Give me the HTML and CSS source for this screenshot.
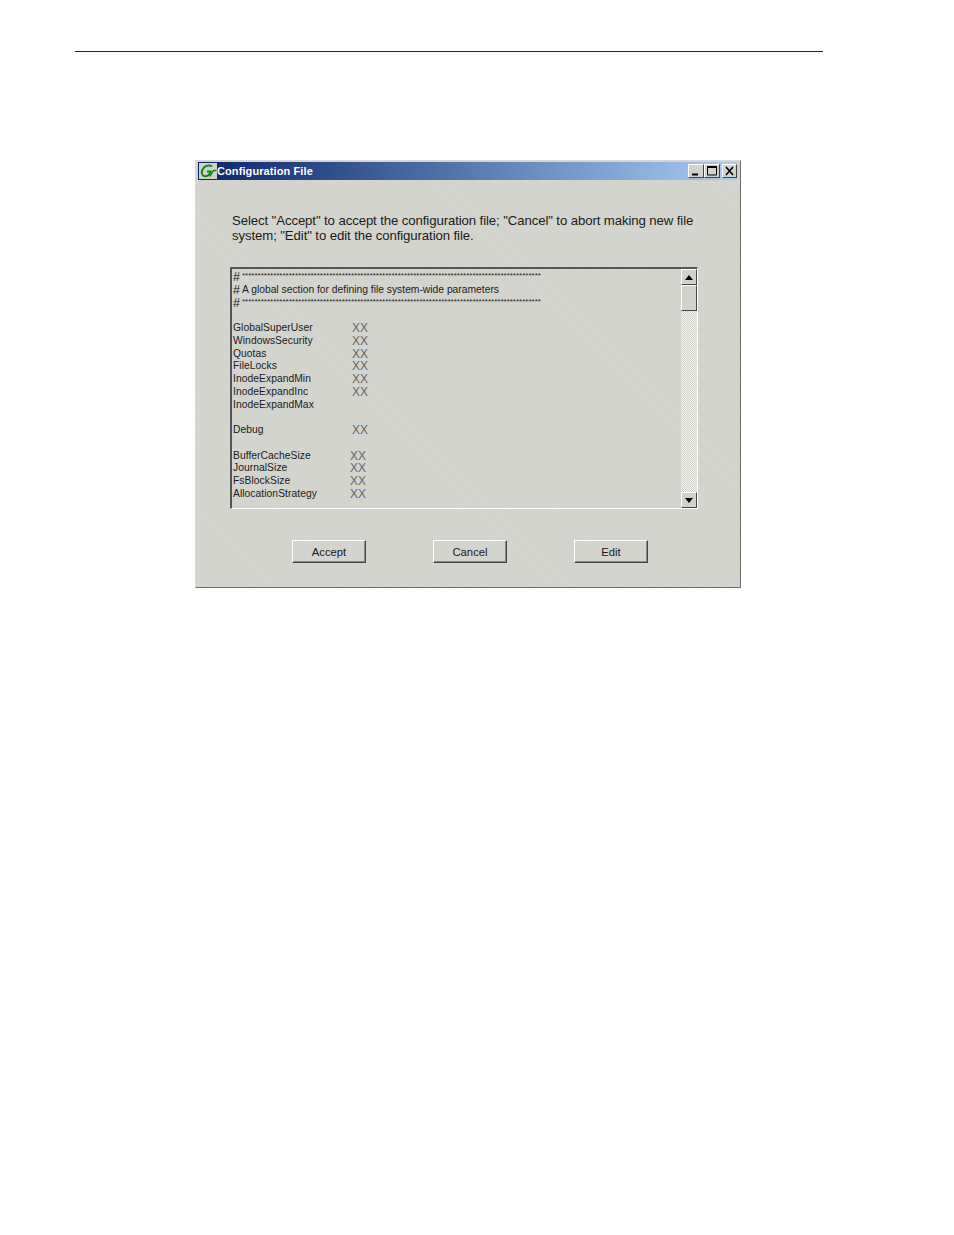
FILE: index.html
```html
<!DOCTYPE html>
<html lang="en">
<head>
    <meta charset="UTF-8">
    <title>Configuration File</title>
    <link rel="stylesheet" href="styles.css">
</head>
<body>
    <div class="page-rule"></div>

    <div class="window">
        <div class="titlebar">
            <span class="app-icon">
                <svg width="18" height="16" viewBox="0 0 18 16">
                    <path d="M13 3.500C11 1.800 7.500 2 5 4.500S2 11 4 12.500s5.500 .5 6.500-1.500L11.500 8.500H8" fill="none" stroke="#0c8a14" stroke-width="2"/>
                    <path d="M10.500 13.500l4-6h3" fill="none" stroke="#0c8a14" stroke-width="1.500"/>
                </svg>
            </span>
            <span class="title">Configuration File</span>
            <div class="win-buttons">
                <span class="win-btn">
                    <svg width="14" height="12" viewBox="0 0 14 12"><path d="M3 9.500h6" stroke="#000" stroke-width="2"/></svg>
                </span>
                <span class="win-btn">
                    <svg width="14" height="12" viewBox="0 0 14 12"><path d="M2.500 2.500h9v7.500h-9z" fill="none" stroke="#000"/><path d="M2 2h10" stroke="#000" stroke-width="2"/></svg>
                </span>
                <span class="win-btn win-close">
                    <svg width="13" height="12" viewBox="0 0 13 12"><path d="M3 2l7 8M10 2l-7 8" stroke="#000" stroke-width="1.600"/></svg>
                </span>
            </div>
        </div>

        <div class="content">
            <p class="message">Select "Accept" to accept the configuration file; "Cancel" to abort making new file system; "Edit" to edit the configuration file.</p>

            <div class="text-box">
                <div class="text-lines">
                    <div class="stars"><span class="hash">#</span><span class="star-run">************************************************************************************************</span></div>
                    <div class="comment"><span class="hash">#</span><span>A global section for defining file system-wide parameters</span></div>
                    <div class="stars"><span class="hash">#</span><span class="star-run">************************************************************************************************</span></div>
                    <div class="row"></div>
                    <div class="row"><span class="key">GlobalSuperUser</span><span class="val">XX</span></div>
                    <div class="row"><span class="key">WindowsSecurity</span><span class="val">XX</span></div>
                    <div class="row"><span class="key">Quotas</span><span class="val">XX</span></div>
                    <div class="row"><span class="key">FileLocks</span><span class="val">XX</span></div>
                    <div class="row"><span class="key">InodeExpandMin</span><span class="val">XX</span></div>
                    <div class="row"><span class="key">InodeExpandInc</span><span class="val">XX</span></div>
                    <div class="row"><span class="key">InodeExpandMax</span></div>
                    <div class="row"></div>
                    <div class="row"><span class="key">Debug</span><span class="val">XX</span></div>
                    <div class="row"></div>
                    <div class="row narrow"><span class="key">BufferCacheSize</span><span class="val">XX</span></div>
                    <div class="row narrow"><span class="key">JournalSize</span><span class="val">XX</span></div>
                    <div class="row narrow"><span class="key">FsBlockSize</span><span class="val">XX</span></div>
                    <div class="row narrow"><span class="key">AllocationStrategy</span><span class="val">XX</span></div>
                </div>
                <div class="scrollbar">
                    <span class="scroll-btn"><svg width="8" height="5" viewBox="0 0 8 5"><path d="M4 0l4 5H0z" fill="#000"/></svg></span>
                    <span class="scroll-thumb"></span>
                    <span class="scroll-track"></span>
                    <span class="scroll-btn"><svg width="8" height="5" viewBox="0 0 8 5"><path d="M0 0h8L4 5z" fill="#000"/></svg></span>
                </div>
            </div>

            <div class="actions">
                <button>Accept</button>
                <button>Cancel</button>
                <button>Edit</button>
            </div>
        </div>
    </div>
</body>
</html>
```

FILE: styles.css
```css
:root {
    --face: #d2d2cc;
    --face-light: #d6d6d0;
    --shadow: #6b6b67;
}

* {
    margin: 0;
    padding: 0;
    box-sizing: border-box;
}

body {
    background: white;
    color: #1a1a1a;
    font-family: "Liberation Sans", Arial, sans-serif;
    height: 1235px;
    overflow: hidden;
}

.page-rule {
    width: 748px;
    height: 1px;
    margin: 51px 0 0 75px;
    background: #222;
}

.window {
    width: 546px;
    height: 428px;
    margin: 108px 0 0 195px;
    padding: 1px 2px 0;
    background: repeating-linear-gradient(45deg, var(--face) 0 1px, var(--face-light) 1px 2px);
    border: 1px solid var(--shadow);
    border-top-color: #d8d8d4;
    border-left-color: #d8d8d4;
    display: flex;
    flex-direction: column;
}

.titlebar {
    height: 18px;
    flex-shrink: 0;
    display: flex;
    align-items: center;
    background: linear-gradient(to right, #0a246a, #a8cdf4);
}

.app-icon {
    width: 18px;
    height: 16px;
    margin-left: 1px;
    background: #d2d2cc;
    display: flex;
}

.title {
    color: white;
    font-size: 11px;
    font-weight: bold;
    letter-spacing: 0.1px;
}

.win-buttons {
    margin-left: auto;
    margin-right: 1px;
    display: flex;
}

.win-btn {
    width: 16px;
    height: 14px;
    background: var(--face);
    border: 1px solid;
    border-color: white #444 #444 white;
    display: flex;
}

.win-close {
    width: 15px;
    margin-left: 2px;
}

.content {
    flex: 1;
    padding: 33px 34px 0 32px;
}

.message {
    width: 475px;
    margin-left: 2px;
    font-size: 13.2px;
    line-height: 15px;
    letter-spacing: -0.1px;
}

.text-box {
    width: 468px;
    height: 242px;
    margin-top: 24px;
    padding: 2px 0 0 1px;
    border: 2px solid;
    border-color: #555 white white #555;
    border-right-width: 1px;
    border-bottom-width: 1px;
    display: flex;
    justify-content: space-between;
}

.text-lines {
    font-size: 10.3px;
    line-height: 12.75px;
}

.stars, .comment {
    display: flex;
    height: 12.75px;
    white-space: nowrap;
}

.hash {
    width: 9px;
    font-size: 12.5px;
}

.star-run {
    width: 299px;
    font-size: 8px;
    line-height: 9px;
    overflow: hidden;
    color: #222;
}

.row {
    display: flex;
    height: 12.750px;
}

.key {
    width: 119px;
    letter-spacing: 0.05px;
}

.val {
    font-size: 12px;
    letter-spacing: 0;
    color: #666;
}

.narrow .key {
    width: 117px;
}

.scrollbar {
    width: 16px;
    margin-top: -2px;
    display: flex;
    flex-direction: column;
}

.scroll-btn {
    height: 16px;
    flex-shrink: 0;
    display: flex;
    align-items: center;
    justify-content: center;
    background: var(--face);
    border: 1px solid;
    border-color: white #444 #444 white;
}

.scroll-thumb {
    height: 26px;
    flex-shrink: 0;
    background: var(--face);
    border: 1px solid;
    border-color: white #444 #444 white;
}

.scroll-track {
    flex: 1;
    background: repeating-conic-gradient(#f4f4f0 0 25%, #cfcfca 0 50%) 0 0 / 2px 2px;
}

.actions {
    display: flex;
    gap: 67px;
    margin: 31px 0 0 62px;
}

button {
    width: 74px;
    height: 23px;
    background: transparent;
    border: 1px solid;
    border-color: white #444 #444 white;
    box-shadow: inset -1px -1px 0 #8a8a86;
    color: #1a1a1a;
    font-family: inherit;
    font-size: 11.3px;
}
```
